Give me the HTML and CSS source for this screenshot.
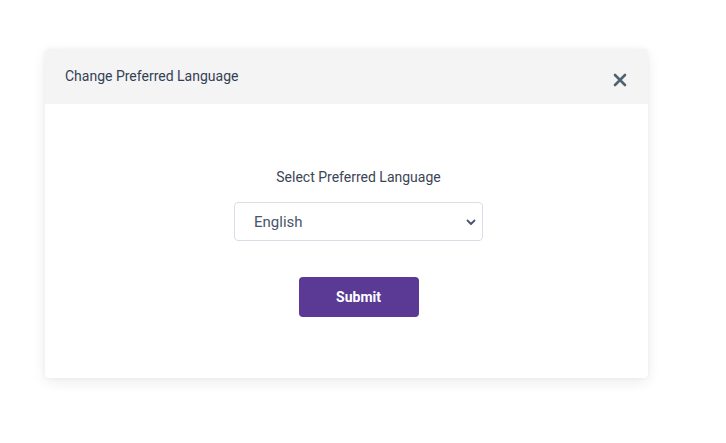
FILE: index.html
```html
<!DOCTYPE html>
<html>
<head>
<meta charset="utf-8">
<link rel="stylesheet" href="styles.css">
</head>
<body>
<div class="page">
  <div class="modal">
    <div class="modal-header">
      <div class="modal-title">Change Preferred Language</div>
      <button class="close" aria-label="Close">
        <svg width="14" height="14" viewBox="0 0 14 14"><path d="M2 2 L12 12 M12 2 L2 12" stroke="#526173" stroke-width="2.6" stroke-linecap="round"/></svg>
      </button>
    </div>
    <div class="modal-body">
      <div class="label">Select Preferred Language</div>
      <div class="select">
        <span>English</span>
        <svg width="10" height="7" viewBox="0 0 10 7"><path d="M1.5 1.5 L5 5 L8.5 1.5" fill="none" stroke="#4a5568" stroke-width="1.8" stroke-linecap="round" stroke-linejoin="round"/></svg>
      </div>
      <button class="submit">Submit</button>
    </div>
  </div>
</div>
</body>
</html>
```
FILE: styles.css
```css
html, body {
  margin: 0;
  padding: 0;
  background: #ffffff;
  font-family: Roboto, "Liberation Sans", sans-serif;
}
.page {
  padding: 49px 0 0 45px;
  min-height: 443px;
  box-sizing: border-box;
}
.modal {
  width: 603px;
  height: 329px;
  background: #ffffff;
  border-radius: 4px;
  box-shadow: 0 4px 14px rgba(0, 0, 0, 0.08), 0 0 4px rgba(0,0,0,0.04);
  overflow: hidden;
  display: flex;
  flex-direction: column;
}
.modal-header {
  height: 55px;
  flex: none;
  background: #f4f4f4;
  display: flex;
  align-items: center;
  justify-content: space-between;
  padding: 0 20px 0 20px;
}
.modal-title {
  font-size: 14px;
  color: #334155;
  margin-top: -1px;
}
.close {
  border: 0;
  background: transparent;
  padding: 0;
  width: 14px;
  height: 14px;
  margin-top: 7px;
  margin-right: 1px;
  display: flex;
}
.modal-body {
  display: flex;
  flex-direction: column;
  align-items: center;
  padding: 64px 0 0 24px;
}
.label {
  font-size: 14px;
  color: #3b4556;
  line-height: 18px;
}
.select {
  margin-top: 16px;
  width: 249px;
  height: 39px;
  box-sizing: border-box;
  border: 1px solid #dcdce6;
  border-radius: 4px;
  display: flex;
  align-items: center;
  justify-content: space-between;
  padding: 1px 6px 0 19px;
  font-size: 15px;
  color: #4a5568;
}
.submit {
  margin-top: 36px;
  width: 120px;
  height: 40px;
  border: 0;
  border-radius: 4px;
  background: #5b3a96;
  color: #ffffff;
  font-family: Roboto, "Liberation Sans", sans-serif;
  font-weight: 700;
  font-size: 14px;
}
```
